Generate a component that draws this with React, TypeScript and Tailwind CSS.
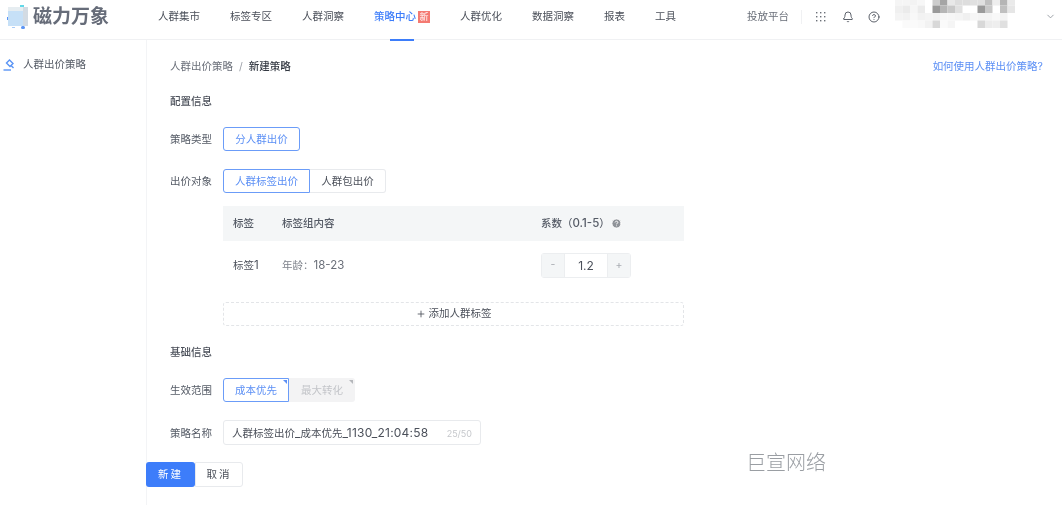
import { Bell, ChevronDown, CircleHelp, Plus } from 'lucide-react';

const navItems = ['人群集市', '标签专区', '人群洞察', '策略中心', '人群优化', '数据洞察', '报表', '工具'];

// pixelated account name, one string of grays per row ('' = white)
const mosaic: string[][] = [
  ['f5', 'f5', 'f3', 'f7', '', 'cc', 'a5', 'e8', 'dd', 'dd', 'e0', 'e0', 'c0', 'ee', 'b5', 'ea'],
  ['f0', 'eb', 'f6', 'eb', '', '99', 'b5', 'c8', 'e0', '', '', '9a', 'c8', '', 'c0', 'e6'],
  ['f4', 'f2', 'f8', 'f2', 'f4', 'f2', 'f6', 'f6', 'f4', 'f0', 'f6', 'f4', 'f4', 'f8', 'f4', ''],
  ['', 'fa', 'fa', 'f8', 'f2', 'd8', 'fa', 'f5', '', '', '', 'd8', 'ec', 'ee', 'e0', ''],
];

function Label({ children }: { children: React.ReactNode }) {
  return <span className="w-[53px] shrink-0 whitespace-nowrap pt-[2px] text-[10.5px] text-[#555b66]">{children}</span>;
}

export default function App() {
  return (
    <div className="relative h-[505px] w-[1062px] overflow-hidden whitespace-nowrap bg-white font-['Inter','Noto_Sans_CJK_SC',sans-serif] text-[10.5px] text-[#4b505a] blur-[0.5px]">
      <header className="flex h-10 items-center border-b border-[#f0f1f3] pb-[6px]">
        <div className="relative ml-2 h-[19px] w-5 shrink-0 bg-[#c6e0f7]">
          <span className="absolute inset-x-0 top-0 h-1 bg-[#e6edf1]" />
          <span className="absolute inset-y-0 right-0 w-[5px] bg-[#d3dbe3]" />
          <span className="absolute -top-[2px] left-3 h-[2px] w-1 bg-[#62d8e8]" />
          <span className="absolute -left-[1px] top-[10px] h-[3px] w-[1px] bg-[#5a94f5]" />
          <span className="absolute -bottom-[3px] left-[13px] h-[3px] w-1 rounded-full bg-[#5a94f5]" />
          <span className="absolute -bottom-[2px] left-1 h-px w-[3px] bg-[#a9ccf8]" />
        </div>
        <span className="ml-[5px] w-[125px] shrink-0 text-[19px] leading-none font-semibold text-[#666c79]">磁力万象</span>
        <nav className="flex h-10 shrink-0 gap-[30px] self-start">
          {navItems.map((item) =>
            item === '策略中心' ? (
              <div key={item} className="relative flex items-center gap-[2px] pb-[6px] font-medium text-[#3d7dfa]">
                {item}
                <span className="flex h-3 w-3 items-center justify-center bg-[#f47a72] text-[9px] font-normal text-white">新</span>
                <span className="absolute -bottom-px left-[16px] h-[2px] w-6 bg-[#3d7dfa]" />
              </div>
            ) : (
              <div key={item} className="flex items-center pb-[6px]">{item}</div>
            ),
          )}
        </nav>
        <span className="ml-[71px] shrink-0 text-[#6a6f79]">投放平台</span>
        <span className="ml-3 h-[14px] w-px shrink-0 bg-[#f0f1f3]" />
        <svg className="ml-[14px] shrink-0" width="10" height="10" viewBox="0 0 10 10" fill="#6b7078">
          {[0, 4, 8].map((y) => [0, 4, 8].map((x) => <rect key={`${x}-${y}`} x={x} y={y} width="1.4" height="1.4" />))}
        </svg>
        <Bell className="ml-[16px] shrink-0 text-[#4b505a]" size={12} strokeWidth={1.8} />
        <CircleHelp className="ml-[14px] shrink-0 text-[#4b505a]" size={12} strokeWidth={1.8} />
        <svg className="ml-[15px] mb-[7px] shrink-0" width="120" height="30" viewBox="0 0 120 30">
          {mosaic.map((row, r) =>
            row.map((g, c) => (g ? <rect key={`${c}-${r}`} x={c * 7.5} y={r * 7.5} width="7.5" height="7.5" fill={`#${g}${g}${g}`} /> : null)),
          )}
        </svg>
        <ChevronDown className="ml-[30px] shrink-0 text-[#8b9098]" size={11} strokeWidth={1.8} />
      </header>

      <div className="flex h-[465px]">
        <aside className="w-[147px] shrink-0 border-r border-[#f3f4f6]">
          <div className="mt-[17px] flex items-center pl-[3px] text-[#555b66]">
            <svg width="12" height="12" viewBox="0 0 12 12" fill="none" stroke="#5a94f5" strokeWidth="1.4">
              <path d="M6.5 1 L10 4.5 L7 7.5 L3.5 4 Z" />
              <path d="M8 6.5 L10.5 9" />
              <path d="M0.5 11 H8" />
            </svg>
            <span className="ml-2">人群出价策略</span>
          </div>
        </aside>

        <main className="-ml-px flex-1">
          <div className="flex items-center justify-between pt-[19px] pl-6 pr-[19px]">
            <div className="flex items-center">
              <span className="text-[#6a6f79]">人群出价策略</span>
              <span className="mx-[6px] text-[#9a9ea6]">/</span>
              <span className="font-medium text-[#333842]">新建策略</span>
            </div>
            <span className="text-[#5b8ff5]">如何使用人群出价策略?</span>
          </div>

          <div className="pl-6">
            <h2 className="mt-[19px] text-[10.5px] font-medium text-[#4b505a]">配置信息</h2>

            <div className="mt-[17px] flex items-center">
              <Label>策略类型</Label>
              <button className="h-6 w-[77px] rounded-[3px] border border-[#6b9cf8] pt-[2px] text-[#5b8ff5]">分人群出价</button>
            </div>

            <div className="mt-[18px] flex items-center">
              <Label>出价对象</Label>
              <div className="flex">
                <button className="h-6 w-[87px] rounded-l-[3px] border border-[#6b9cf8] pt-[2px] text-[#5b8ff5]">人群标签出价</button>
                <button className="h-6 w-[76px] rounded-r-[3px] border border-l-0 border-[#e8eaed] pt-[2px]">人群包出价</button>
              </div>
            </div>

            <div className="ml-[53px] mt-[13px] w-[461px]">
              <div className="flex h-[35px] items-center bg-[#f4f6f7] pl-[10px] pt-px font-medium text-[#555b66]">
                <span className="w-[49px]">标签</span>
                <span className="w-[259px]">标签组内容</span>
                <span>系数（<span className="text-[11.5px]">0.1-5</span>）</span>
                <CircleHelp className="ml-px fill-[#8f9399] text-white" size={11} />
              </div>
              <div className="flex h-[49px] items-center pl-[10px]">
                <span className="w-[49px] pt-[2px]">标签<span className="text-[11.5px]">1</span></span>
                <span className="w-[259px] pt-[2px] text-[#7d818a]">年龄：<span className="text-[11.5px] text-[#6a6f79]">18-23</span></span>
                <div className="flex h-[25px] w-[90px] rounded-[3px] border border-[#eceef0]">
                  <span className="flex w-[22px] items-center justify-center bg-[#f4f6f7] text-[#a9adb3]">-</span>
                  <span className="flex flex-1 items-center justify-center border-x border-[#eceef0] pt-px text-[12px]">1.2</span>
                  <span className="flex w-[22px] items-center justify-center bg-[#f4f6f7] text-[#a9adb3]">+</span>
                </div>
              </div>
              <div className="mt-3 flex h-6 items-center justify-center rounded-[3px] border border-dashed border-[#e3e5e8]">
                <Plus size={10} className="mr-[3px]" />
                添加人群标签
              </div>
            </div>

            <h2 className="mt-[19px] text-[10.5px] font-medium text-[#4b505a]">基础信息</h2>

            <div className="mt-[18px] flex items-center">
              <Label>生效范围</Label>
              <div className="flex">
                <button className="relative h-6 w-[66px] rounded-l-[3px] border border-[#6b9cf8] pt-[2px] text-[#5b8ff5]">
                  成本优先
                  <span className="absolute right-[1px] top-[1px] h-0 w-0 border-l-[4px] border-t-[4px] border-l-transparent border-t-[#5b8ff5]" />
                </button>
                <button className="relative h-6 w-[66px] rounded-r-[3px] bg-[#f3f3f4] pt-[2px] text-[#c3c5c9]">
                  最大转化
                  <span className="absolute right-[2px] top-[2px] h-0 w-0 border-l-[4px] border-t-[4px] border-l-transparent border-t-[#b5b7bb]" />
                </button>
              </div>
            </div>

            <div className="mt-[18px] flex items-center">
              <Label>策略名称</Label>
              <div className="flex h-[25px] w-[258px] items-center justify-between rounded-[3px] border border-[#e8eaed] pl-2 pr-2 pt-px">
                <span>人群标签出价<span className="text-[12px]">_</span>成本优先<span className="text-[12px] tracking-[0.2px]">_1130_21:04:58</span></span>
                <span className="text-[9px] text-[#c6c8cc]">25/50</span>
              </div>
            </div>
          </div>

          <div className="mt-[17px] flex">
            <button className="h-[25px] w-[49px] rounded-[3px] bg-[#3d7dfa] tracking-[2px] text-white">新建</button>
            <button className="h-[25px] w-[48px] rounded-r-[3px] border border-[#e8eaed] tracking-[2px]">取消</button>
          </div>
        </main>
      </div>

      <span className="absolute left-[746px] top-[451px] text-[20px] font-light leading-6 text-[#9a9ea3]">巨宣网络</span>
    </div>
  );
}
